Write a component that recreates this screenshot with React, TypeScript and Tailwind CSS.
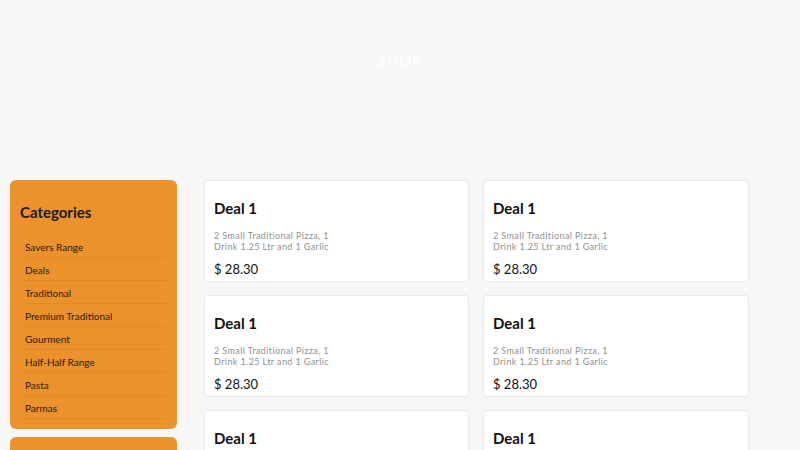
import React from "react";

const categories = [
  "Savers Range",
  "Deals",
  "Traditional",
  "Premium Traditional",
  "Gourment",
  "Half-Half Range",
  "Pasta",
  "Parmas",
];

const deals = Array.from({ length: 6 }, (_, i) => ({
  id: i,
  title: "Deal 1",
  line1: "2 Small Traditional Pizza, 1",
  line2: "Drink 1.25 Ltr and 1 Garlic",
  price: "$ 28.30",
}));

function DealCard({ deal }: { deal: (typeof deals)[number] }) {
  return (
    <div className="h-[102px] bg-white border border-[#e9e9e9] rounded-[3px] px-[9px] pt-[17px]">
      <h3 className="text-[15px] leading-[20px] font-bold text-[#111]">{deal.title}</h3>
      <p className="mt-[12px] text-[9px] leading-[11px] tracking-[0.4px] text-[#8f8f8f]">
        <span className="block">{deal.line1}</span>
        <span className="block">{deal.line2}</span>
      </p>
      <p className="mt-[8px] text-[13px] leading-[18px] text-[#111]">{deal.price}</p>
    </div>
  );
}

export default function App() {
  return (
    <div
      className="min-h-[450px] h-[450px] overflow-hidden bg-[#f7f7f7]"
      style={{ fontFamily: "Lato, 'Noto Sans', sans-serif" }}
    >
      <header className="h-[120px] flex items-center justify-center">
        <h1 className="text-[15px] text-white tracking-[0.5px]">SHOP</h1>
      </header>

      <main className="flex items-start pl-[10px] pt-[60px]">
        <aside className="w-[167px] shrink-0 flex flex-col gap-[8px]">
          <div className="bg-[#ec922d] rounded-[6px] px-[10px] pt-[21px] pb-[10px]">
            <h2 className="text-[15px] leading-[22px] font-bold text-[#1a1a1a]">Categories</h2>
            <ul className="mt-[12px]">
              {categories.map((c) => (
                <li
                  key={c}
                  className="h-[23px] flex items-center pt-[2px] pl-[5px] text-[10px] text-[#2a1a08] border-b border-[#e0882a]"
                >
                  {c}
                </li>
              ))}
            </ul>
          </div>
          <div className="bg-[#ec922d] rounded-[6px] h-[60px]" />
        </aside>

        <section className="ml-[27px] grid grid-cols-[265px_266px] gap-x-[14px] gap-y-[13px]">
          {deals.map((d) => (
            <DealCard key={d.id} deal={d} />
          ))}
        </section>
      </main>
    </div>
  );
}
